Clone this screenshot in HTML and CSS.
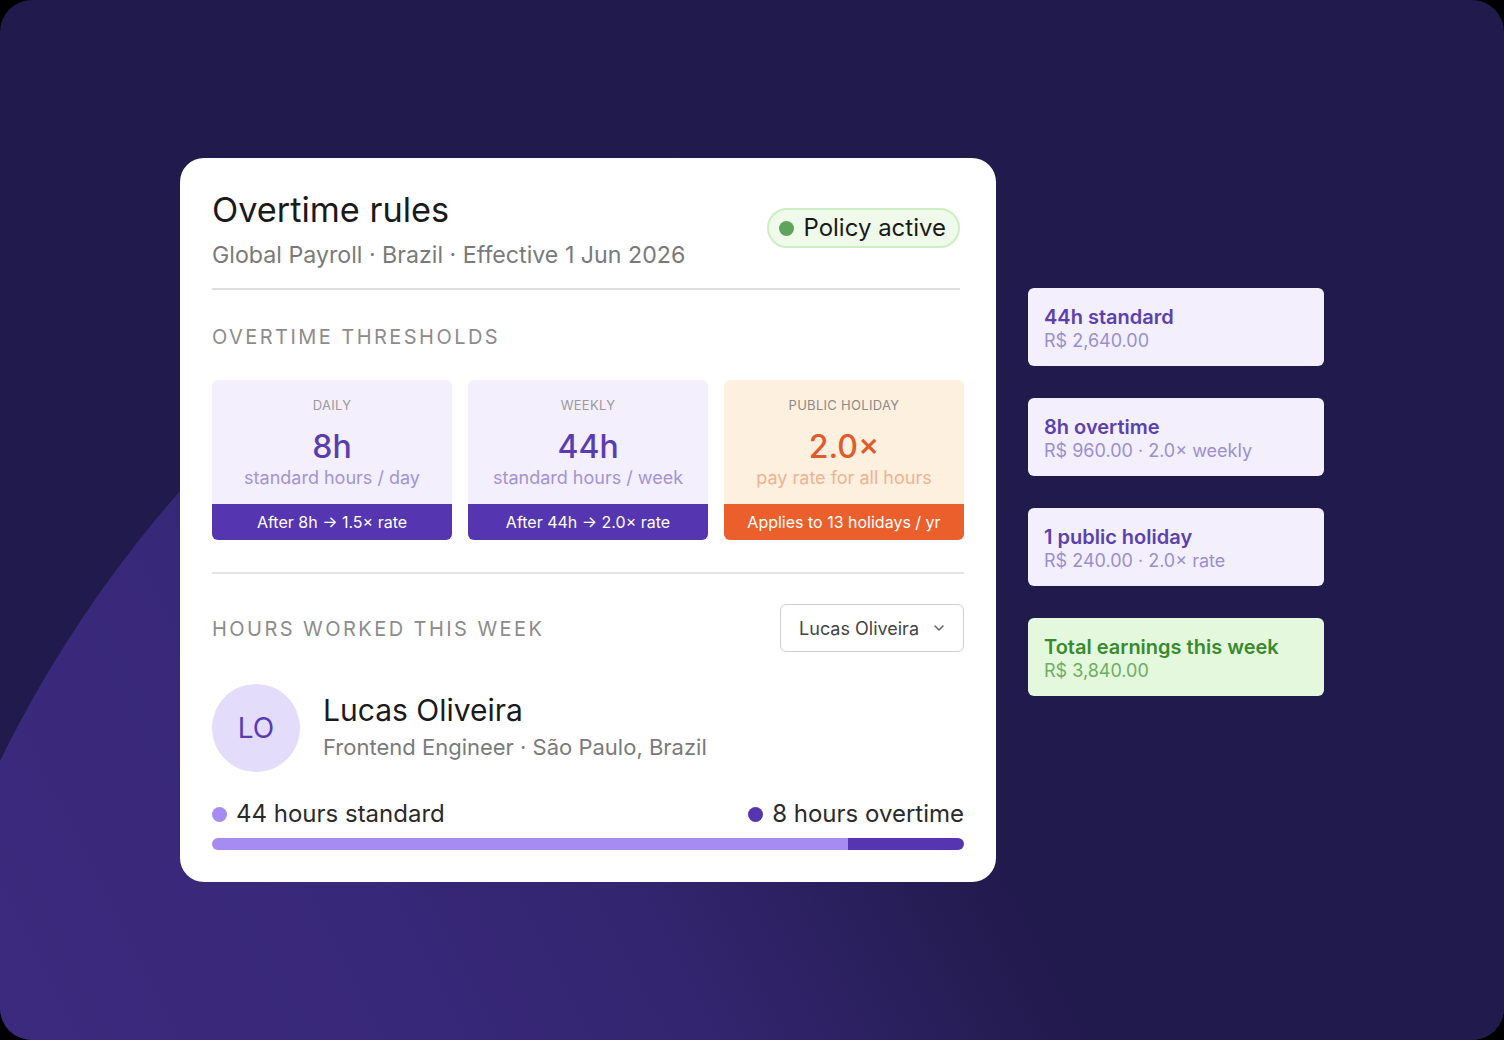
FILE: index.html
```html
<!DOCTYPE html>
<html lang="en">

<head>
  <meta charset="UTF-8">
  <meta name="viewport" content="width=device-width, initial-scale=1.0">
  <title>Overtime rules</title>
  <link rel="stylesheet" href="styles.css">
</head>

<body>
  <div class="stage">
    <div class="rules-card">
      <div class="card-header">
        <div>
          <h1>Overtime rules</h1>
          <div class="subtitle">Global Payroll · Brazil · Effective 1 Jun 2026</div>
        </div>
        <div class="status-badge"><span class="status-dot"></span>Policy active</div>
      </div>

      <div class="section-label thresholds-label">Overtime thresholds</div>
      <div class="thresholds">
        <div class="threshold">
          <div class="threshold-body">
            <div class="threshold-kind">DAILY</div>
            <div class="threshold-value">8h</div>
            <div class="threshold-note">standard hours / day</div>
          </div>
          <div class="threshold-rule">After 8h → 1.5× rate</div>
        </div>
        <div class="threshold">
          <div class="threshold-body">
            <div class="threshold-kind">WEEKLY</div>
            <div class="threshold-value">44h</div>
            <div class="threshold-note">standard hours / week</div>
          </div>
          <div class="threshold-rule">After 44h → 2.0× rate</div>
        </div>
        <div class="threshold holiday">
          <div class="threshold-body">
            <div class="threshold-kind">PUBLIC HOLIDAY</div>
            <div class="threshold-value">2.0×</div>
            <div class="threshold-note">pay rate for all hours</div>
          </div>
          <div class="threshold-rule">Applies to 13 holidays / yr</div>
        </div>
      </div>

      <div class="week-head">
        <div class="section-label week-label">Hours worked this week</div>
        <div class="select">
          Lucas Oliveira
          <svg width="12" height="8" viewBox="0 0 12 8"><path d="M2 2l4 4 4-4" fill="none" stroke="#666" stroke-width="1.6" stroke-linecap="round" stroke-linejoin="round"/></svg>
        </div>
      </div>

      <div class="person">
        <div class="avatar">LO</div>
        <div class="person-info">
          <div class="person-name">Lucas Oliveira</div>
          <div class="person-role">Frontend Engineer · São Paulo, Brazil</div>
        </div>
      </div>

      <div class="legend">
        <span><i class="dot light"></i>44 hours standard</span>
        <span><i class="dot dark"></i>8 hours overtime</span>
      </div>
      <div class="hours-bar">
        <div class="hours-standard" style="width: 84.6%"></div>
        <div class="hours-overtime"></div>
      </div>
    </div>

    <div class="summary">
      <div class="summary-item">
        <div class="summary-title">44h standard</div>
        <div class="summary-sub">R$ 2,640.00</div>
      </div>
      <div class="summary-item">
        <div class="summary-title">8h overtime</div>
        <div class="summary-sub">R$ 960.00 · 2.0× weekly</div>
      </div>
      <div class="summary-item">
        <div class="summary-title">1 public holiday</div>
        <div class="summary-sub">R$ 240.00 · 2.0× rate</div>
      </div>
      <div class="summary-item total">
        <div class="summary-title">Total earnings this week</div>
        <div class="summary-sub">R$ 3,840.00</div>
      </div>
    </div>
  </div>
</body>

</html>
```

FILE: styles.css
```css
body {
  font-family: 'Inter', 'Noto Sans', sans-serif;
  margin: 0;
  padding: 0;
  background: #000;
  color: #1a1a1a;
}

.stage {
  position: relative;
  width: 1504px;
  height: 1040px;
  box-sizing: border-box;
  padding: 158px 0 0 180px;
  display: flex;
  align-items: flex-start;
  gap: 32px;
  background: #211a4c;
  border-radius: 32px;
  overflow: hidden;
}

/* big soft curve in the lower left, fading out toward the top right */
.stage::before {
  content: '';
  position: absolute;
  left: -125px;
  top: 75px;
  width: 2450px;
  height: 2450px;
  border-radius: 50%;
  background: linear-gradient(63deg, #3b2a7d 0%, #38287a 20%, #33256f 35%, #2b205f 44%, #231b4f 52%, #211a4c 56%) fixed;
}

.rules-card {
  position: relative;
  width: 816px;
  box-sizing: border-box;
  padding: 32px;
  background: #fff;
  border-radius: 24px;
}

.card-header {
  display: flex;
  justify-content: space-between;
  align-items: center;
  margin-right: 4px;
  padding-bottom: 18px;
  border-bottom: 2px solid #dedede;
}

h1 {
  margin: 0;
  font-size: 34.3px;
  line-height: 40px;
  font-weight: 400;
  color: #1a1a1a;
}

.subtitle {
  margin-top: 10px;
  font-size: 23.2px;
  line-height: 30px;
  color: #7a7a7a;
}

.status-badge {
  display: flex;
  align-items: center;
  gap: 9px;
  margin-top: -4px;
  padding: 4px 12px 4px 10px;
  font-size: 24px;
  line-height: 28px;
  border: 2px solid #cdeec2;
  background: #effaea;
  border-radius: 20px;
}

.status-dot {
  width: 15px;
  height: 15px;
  border-radius: 50%;
  background: #5ea45c;
}

.section-label {
  font-size: 20px;
  line-height: 24px;
  letter-spacing: 2.45px;
  text-transform: uppercase;
  color: #8c8c8c;
}

.thresholds-label {
  margin-top: 35px;
}

.thresholds {
  display: grid;
  grid-template-columns: repeat(3, 1fr);
  gap: 16px;
  margin-top: 31px;
  padding-bottom: 32px;
  border-bottom: 2px solid #e4e4e4;
}

.threshold {
  border-radius: 6px;
  overflow: hidden;
  text-align: center;
  background: #f3effc;
}

.threshold-body {
  height: 124px;
  box-sizing: border-box;
  padding-top: 17px;
}

.threshold-kind {
  font-size: 13px;
  line-height: 16px;
  letter-spacing: 0.3px;
  color: #9a9a9a;
}

.threshold-value {
  margin-top: 15px;
  font-size: 32px;
  line-height: 38px;
  font-weight: 500;
  color: #5a3cb2;
}

.threshold-note {
  margin-top: 1px;
  font-size: 18px;
  line-height: 22px;
  color: #a394d4;
}

.threshold-rule {
  height: 36px;
  line-height: 36px;
  font-size: 16px;
  color: #fff;
  background: #5535b0;
}

.holiday {
  background: #fdf0df;
}

.holiday .threshold-kind {
  color: #8f8a86;
}

.holiday .threshold-value {
  color: #e05a2a;
}

.holiday .threshold-note {
  color: #efb293;
}

.holiday .threshold-rule {
  background: #ea5f2b;
}

.week-head {
  display: flex;
  justify-content: space-between;
  align-items: center;
  margin-top: 30px;
}

.week-label {
  padding-top: 2px;
}

.select {
  display: flex;
  align-items: center;
  gap: 14px;
  height: 48px;
  box-sizing: border-box;
  padding: 0 18px;
  font-size: 18px;
  color: #444;
  border: 1px solid #cfcfcf;
  border-radius: 6px;
}

.person {
  display: flex;
  align-items: center;
  gap: 23px;
  margin-top: 32px;
}

.avatar {
  width: 88px;
  height: 88px;
  border-radius: 50%;
  background: #e3dcfa;
  color: #5a3cb2;
  font-size: 28px;
  display: flex;
  align-items: center;
  justify-content: center;
}

.person-info {
  padding-bottom: 3px;
}

.person-name {
  font-size: 30px;
  line-height: 36px;
  color: #1a1a1a;
}

.person-role {
  margin-top: 5px;
  font-size: 22px;
  line-height: 28px;
  color: #7a7a7a;
}

.legend {
  display: flex;
  justify-content: space-between;
  margin-top: 27px;
  font-size: 24px;
  line-height: 30px;
  color: #2a2a2a;
}

.legend span {
  display: flex;
  align-items: center;
  gap: 9px;
}

.dot {
  width: 15px;
  height: 15px;
  border-radius: 50%;
}

.dot.light {
  background: #a68cf2;
}

.dot.dark {
  background: #5535b0;
}

.hours-bar {
  display: flex;
  height: 12px;
  margin-top: 9px;
  border-radius: 6px;
  overflow: hidden;
}

.hours-standard {
  background: #a68cf2;
}

.hours-overtime {
  flex: 1;
  background: #5535b0;
}

.summary {
  position: relative;
  display: flex;
  flex-direction: column;
  gap: 32px;
  margin-top: 130px;
  width: 296px;
}

.summary-item {
  height: 78px;
  box-sizing: border-box;
  padding: 17px 16px 0;
  border-radius: 6px;
  background: #f3effc;
}

.summary-title {
  font-size: 20px;
  line-height: 24px;
  font-weight: 600;
  color: #5b41ae;
}

.summary-sub {
  margin-top: 1px;
  font-size: 18px;
  line-height: 22px;
  color: #9a8fcf;
}

.summary-item.total {
  background: #e4f8dd;
}

.total .summary-title {
  color: #3a8a2f;
}

.total .summary-sub {
  color: #6cae62;
}
```
